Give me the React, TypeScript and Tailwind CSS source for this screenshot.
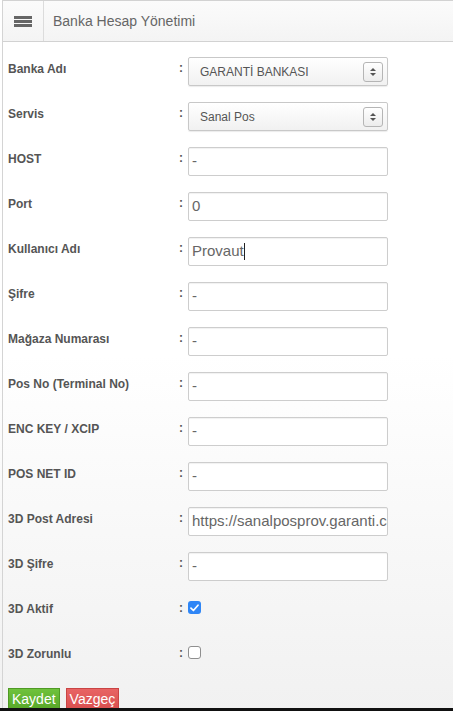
import React from "react";

const rows: { label: string; type: "select" | "text" | "check"; value?: string; checked?: boolean }[] = [
  { label: "Banka Adı", type: "select", value: "GARANTİ BANKASI" },
  { label: "Servis", type: "select", value: "Sanal Pos" },
  { label: "HOST", type: "text", value: "-" },
  { label: "Port", type: "text", value: "0" },
  { label: "Kullanıcı Adı", type: "text", value: "Provaut" },
  { label: "Şifre", type: "text", value: "-" },
  { label: "Mağaza Numarası", type: "text", value: "-" },
  { label: "Pos No (Terminal No)", type: "text", value: "-" },
  { label: "ENC KEY / XCIP", type: "text", value: "-" },
  { label: "POS NET ID", type: "text", value: "-" },
  { label: "3D Post Adresi", type: "text", value: "https://sanalposprov.garanti.com.tr/servlet/gt3dengine" },
  { label: "3D Şifre", type: "text", value: "-" },
  { label: "3D Aktif", type: "check", checked: true },
  { label: "3D Zorunlu", type: "check", checked: false },
];

function SelectBox({ value }: { value: string }) {
  return (
    <div className="w-[200px] h-[29px] border border-[#c8c8c8] rounded-[2px] bg-gradient-to-b from-white to-[#f1f1f1] flex items-center justify-between pl-[11px] pr-[4px] shadow-[0_1px_1px_rgba(0,0,0,0.08)]">
      <span className="text-[12px] text-[#555]">{value}</span>
      <div className="w-[20px] h-[20px] border border-[#b5b5b5] rounded-[3px] bg-gradient-to-b from-white to-[#ececec] flex items-center justify-center">
        <svg width="8" height="10" viewBox="0 0 8 10">
          <path d="M4 1 L7 4 L1 4 Z" fill="#555" />
          <path d="M4 9 L7 6 L1 6 Z" fill="#555" />
        </svg>
      </div>
    </div>
  );
}

function TextBox({ value, caret }: { value: string; caret?: boolean }) {
  return (
    <div className="w-[200px] h-[29px] border border-[#cdcdcd] rounded-[2px] bg-white flex items-center pl-[3px] overflow-hidden shadow-[inset_0_1px_1px_rgba(0,0,0,0.06)]">
      <span className="text-[15px] text-[#666] whitespace-nowrap">{value}</span>
      {caret && <span className="w-px h-[17px] bg-[#222]" />}
    </div>
  );
}

function Check({ checked }: { checked?: boolean }) {
  return checked ? (
    <div className="w-[13px] h-[13px] rounded-[3px] bg-[#2f86f6] flex items-center justify-center">
      <svg width="9" height="8" viewBox="0 0 9 8">
        <path d="M1 4.2 L3.4 6.5 L8 1.2" stroke="white" strokeWidth="1.7" fill="none" strokeLinecap="round" strokeLinejoin="round" />
      </svg>
    </div>
  ) : (
    <div className="w-[13px] h-[13px] rounded-[3px] border border-[#8f8f8f] bg-white" />
  );
}

export default function App() {
  return (
    <div
      className="w-[453px] h-[711px] overflow-hidden flex flex-col bg-gradient-to-b from-white via-white to-[#f1f1f1]"
      style={{ fontFamily: '"Liberation Sans", Arial, Helvetica, sans-serif' }}
    >
      <div className="flex-1 ml-[2px] border-l border-[#d4d4d4] flex flex-col min-h-0">
        <div className="h-[42px] shrink-0 flex border-b border-t border-[#d2d2d2] bg-gradient-to-b from-[#fbfbfb] to-[#f4f4f4]">
          <div className="w-[41px] border-r border-[#dcdcdc] flex flex-col items-center justify-center gap-[1px]">
            <div className="w-[18px] h-[3px] bg-[#666]" />
            <div className="w-[18px] h-[3px] bg-[#666]" />
            <div className="w-[18px] h-[3px] bg-[#666]" />
          </div>
          <div className="flex items-center pl-[9px] text-[14px] text-[#666]">Banka Hesap Yönetimi</div>
        </div>
        <div className="flex flex-col pt-[10px] pl-[5px]">
          {rows.map((r, i) => (
            <div key={i} className="h-[45px] flex items-start">
              <div className="w-[171px] pt-[8px] text-[12px] font-bold text-[#555]">{r.label}</div>
              <div className="w-[9px] pt-[7px] text-[12px] font-bold text-[#555]">:</div>
              <div className={r.type === "check" ? "pt-[9px]" : "pt-[5px]"}>
                {r.type === "select" && <SelectBox value={r.value!} />}
                {r.type === "text" && <TextBox value={r.value!} caret={r.label === "Kullanıcı Adı"} />}
                {r.type === "check" && <Check checked={r.checked} />}
              </div>
            </div>
          ))}
          <div className="flex gap-[6px] pt-[6px]">
            <button className="h-[22px] px-[3px] text-[14px] text-white bg-gradient-to-b from-[#6fc23c] to-[#58a829] border border-[#4f9a24]">Kaydet</button>
            <button className="h-[22px] px-[3px] text-[14px] text-white bg-gradient-to-b from-[#e86464] to-[#d94f4f] border border-[#c94444]">Vazgeç</button>
          </div>
        </div>
      </div>
      <div className="h-[3px] shrink-0 bg-[#111]" />
    </div>
  );
}
